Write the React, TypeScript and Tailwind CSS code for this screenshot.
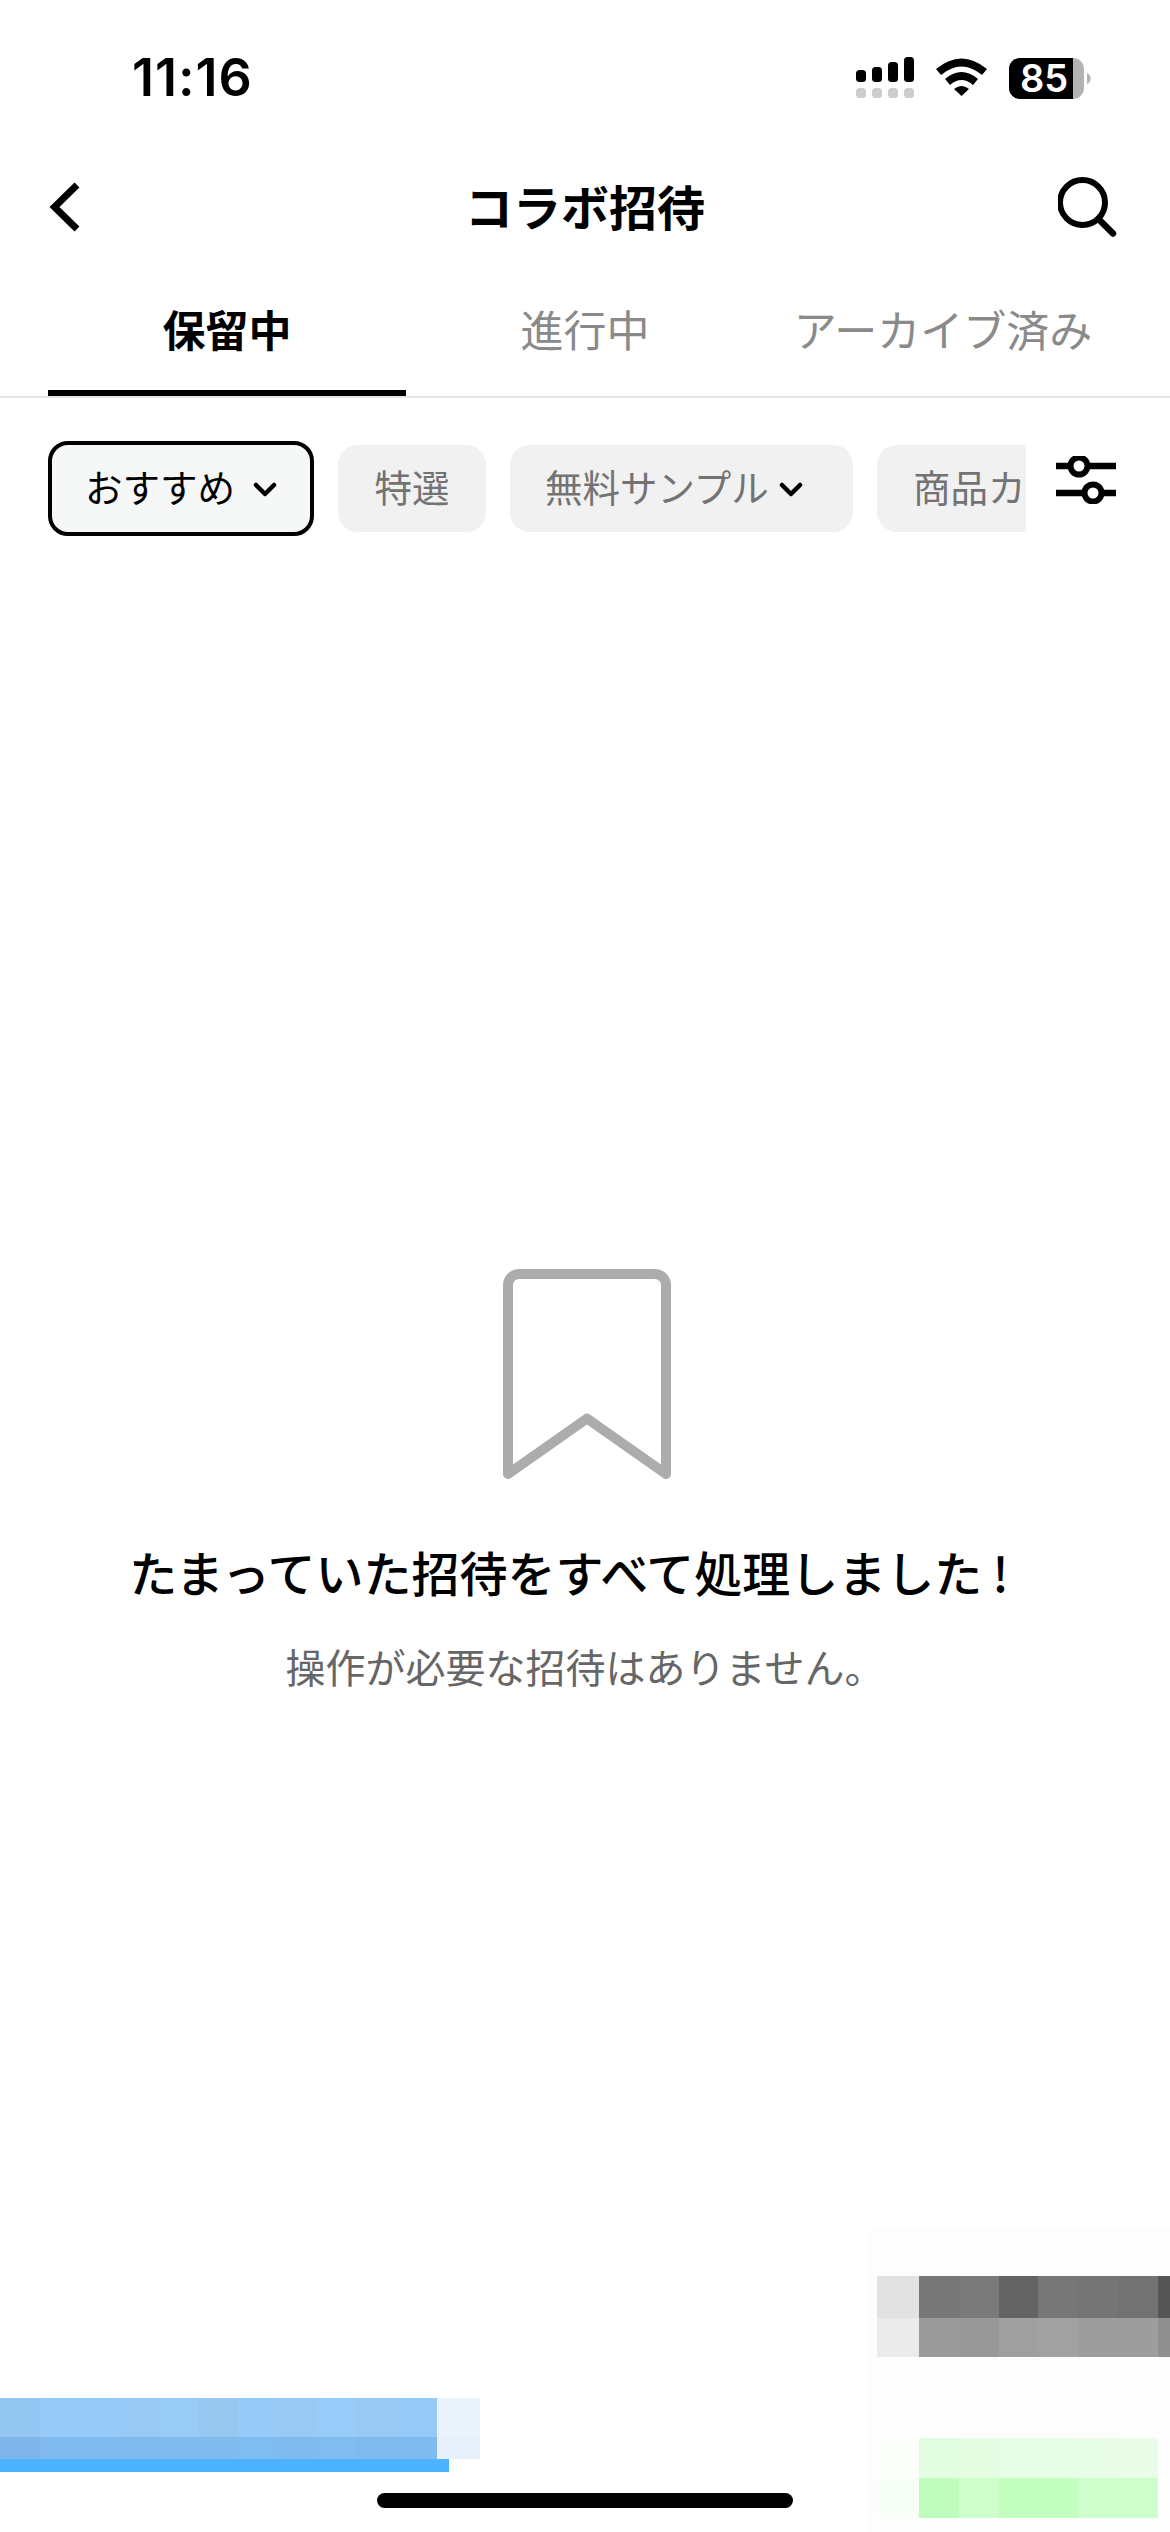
const JP = "font-['Noto_Sans_CJK_JP','Noto_Sans',sans-serif]";

const TABS = [
  { label: "保留中", active: true },
  { label: "進行中", active: false },
  { label: "アーカイブ済み", active: false },
];

const GREY_TOP = ["#777777", "#7a7a7a", "#636363", "#777777", "#757575", "#727272", "#555555"];
const GREY_BOTTOM = ["#9b9b9b", "#989898", "#9f9f9f", "#a1a1a1", "#9d9d9d", "#9d9d9d", "#8f8f8f"];
const GREEN_TOP = ["#e3fde2", "#e4fde3", "#e6fee5", "#e7fee6", "#e8fde7", "#eafde9"];
const GREEN_BOTTOM = ["#bffdbd", "#cdfecb", "#c3fec1", "#c3fec1", "#cdfecb", "#cffecd"];
const BLUE_TOP = ["#94c6f2", "#95caf9", "#95caf9", "#97c9f4", "#98cbf6", "#97c6ef", "#95caf9", "#97c9f4", "#97cbf8", "#97c9f3", "#95caf8"];
const BLUE_BOTTOM = ["#7eb6e9", "#81bbee", "#81bbee", "#81baec", "#81baec", "#81baec", "#7fbdf1", "#80bbee", "#80bcef", "#7fbaec", "#80bbed"];

function StatusBar() {
  return (
    <div className="flex h-[156px] items-center justify-between pl-[132px] pr-[79px]">
      <span className="font-['Inter',sans-serif] text-[52px] font-semibold tracking-[1px] text-black">11:16</span>
      <div className="flex items-center">
        <svg width="131" height="42" viewBox="856 57 131 42" aria-hidden>
          <rect x="856" y="70" width="10" height="12" rx="3.5" fill="#000" />
          <rect x="872" y="67" width="10" height="15" rx="3.5" fill="#000" />
          <rect x="888" y="62" width="10" height="20" rx="3.5" fill="#000" />
          <rect x="904" y="57" width="10" height="25" rx="3.5" fill="#000" />
          {[856, 872, 888, 904].map((x) => (
            <rect key={x} x={x} y="88" width="10" height="10" rx="3.5" fill="#cccccc" />
          ))}
          <path d="M936 69 Q961.5 48 987 69 L982 75 Q961.5 58 941 75 Z" fill="#000" />
          <path d="M945 79 Q961.5 65 978 79 L973 85 Q961.5 75 950 85 Z" fill="#000" />
          <path d="M954 89 Q961.5 83 969 89 L961.5 96 Z" fill="#000" />
        </svg>
        <div className="ml-[22px] flex h-[41px] w-[75px] rounded-[11px] bg-[#b3b3b3]">
          <div className="h-full w-[64px] rounded-l-[11px] bg-black pl-[11px] font-['Inter',sans-serif] text-[38px] leading-[41px] font-semibold text-white">
            85
          </div>
        </div>
        <svg className="ml-[3px]" width="4" height="11" viewBox="0 0 4 11" aria-hidden>
          <path d="M0 0 A6 6 0 0 1 0 11 Z" fill="#b3b3b3" />
        </svg>
      </div>
    </div>
  );
}

function Header() {
  return (
    <div className="grid h-[102px] grid-cols-[1fr_auto_1fr] items-center px-[48px]">
      <svg width="34" height="54" viewBox="48 180 34 54" aria-hidden>
        <path d="M77 185 L54.500 207 L77 229" fill="none" stroke="#000" strokeWidth="7" />
      </svg>
      <h1 className={`${JP} pb-[4px] text-[48px] leading-none font-bold text-black`}>コラボ招待</h1>
      <svg className="justify-self-end" width="64" height="64" viewBox="1058 175 64 64" aria-hidden>
        <circle cx="1082.500" cy="202.500" r="22.500" fill="none" stroke="#000" strokeWidth="6" />
        <path d="M1098.500 219 L1113 233.500" fill="none" stroke="#000" strokeWidth="6.5" strokeLinecap="round" />
      </svg>
    </div>
  );
}

function Tabs() {
  return (
    <div className="border-b-2 border-[#e6e6e6]">
      <div className="grid grid-cols-3 px-[48px]">
        {TABS.map((tab) => (
          <div
            key={tab.label}
            className={`${JP} flex h-[138px] items-center justify-center pt-[8px] text-[43px] leading-none ${
              tab.active ? "border-b-[6px] border-black font-semibold text-black" : "pb-[6px] text-[#8a8a8a]"
            }`}
          >
            {tab.label}
          </div>
        ))}
      </div>
    </div>
  );
}

function Chevron() {
  return (
    <svg className="mt-[8px]" width="24" height="16" viewBox="0 0 24 16" aria-hidden>
      <path d="M3 3 L12 12 L21 3" fill="none" stroke="#000" strokeWidth="4.5" strokeLinecap="round" strokeLinejoin="round" />
    </svg>
  );
}

function FilterRow() {
  return (
    <div className="mt-[43px] flex items-start pl-[48px]">
      <div className={`${JP} flex w-[978px] shrink-0 items-center gap-[24px] overflow-hidden text-[37.500px] leading-none`}>
        <div className="flex h-[95px] w-[266px] shrink-0 items-center justify-center gap-[18px] rounded-[20px] border-4 border-black bg-[#f6f8f8] pb-[5px] text-black">
          おすすめ
          <Chevron />
        </div>
        <div className="flex h-[87px] w-[148px] shrink-0 items-center justify-center rounded-[20px] bg-[#f1f1f1] pb-[5px] text-[#737373]">
          特選
        </div>
        <div className="flex h-[87px] w-[343px] shrink-0 items-center gap-[10px] rounded-[20px] bg-[#f1f1f1] pb-[5px] pl-[35px] text-[#737373]">
          無料サンプル
          <Chevron />
        </div>
        <div className="flex h-[87px] w-[149px] shrink-0 items-center rounded-l-[20px] bg-[#f1f1f1] pb-[5px] pl-[36px] text-[#737373]">
          商品カ
        </div>
      </div>
      <svg className="mt-[15px] ml-[30px]" width="60" height="48" viewBox="1056 456 60 48" aria-hidden>
        <path d="M1056 466 H1069 M1090 466 H1116 M1056 493 H1082 M1103 493 H1116" fill="none" stroke="#000" strokeWidth="6.5" strokeLinecap="round" />
        <circle cx="1079" cy="466" r="8.5" fill="none" stroke="#000" strokeWidth="6" />
        <circle cx="1093" cy="493" r="8.5" fill="none" stroke="#000" strokeWidth="6" />
      </svg>
    </div>
  );
}

function EmptyState() {
  return (
    <div className="mt-[733px] flex flex-col items-center">
      <svg className="ml-[4px]" width="168" height="210" viewBox="504 1269 168 210" aria-hidden>
        <path
          d="M509 1474 V1285 A11 11 0 0 1 520 1274 H656 A11 11 0 0 1 667 1285 V1474 L588 1418.500 Z"
          fill="none"
          stroke="#acacac"
          strokeWidth="10"
          strokeLinejoin="round"
        />
      </svg>
      <p className={`${JP} mt-[64px] pr-[32px] text-[48px] leading-[56px] font-medium whitespace-nowrap text-black`}>
        たまっていた招待をすべて処理しました<span className="ml-[10px]">!</span>
      </p>
      <p className={`${JP} mt-[39px] text-[40px] leading-[56px] whitespace-nowrap text-[#666666]`}>
        操作が必要な招待はありません。
      </p>
    </div>
  );
}

// pixelated patches that cover parts of the screenshot
function MosaicPatches() {
  return (
    <>
      <div className="absolute top-[2398px] left-0 flex h-[39px] w-[480px]">
        {BLUE_TOP.map((c, i) => (
          <div key={i} className="h-full flex-1" style={{ backgroundColor: c }} />
        ))}
        <div className="h-full w-[43px] bg-[#eaf2fc]" />
      </div>
      <div className="absolute top-[2437px] left-0 flex h-[22px] w-[480px]">
        {BLUE_BOTTOM.map((c, i) => (
          <div key={i} className="h-full flex-1" style={{ backgroundColor: c }} />
        ))}
        <div className="h-full w-[43px] bg-[#e6effa]" />
      </div>
      <div className="absolute top-[2459px] left-0 h-[13px] w-[449px] bg-[#4db3ff]" />

      <div className="absolute top-[2228px] left-[870px] h-[304px] w-[300px] bg-[#fdfdfd]" />
      <div className="absolute top-[2276px] left-[877px] flex h-[42px] w-[293px]">
        <div className="h-full w-[42px] bg-[#e2e2e2]" />
        {GREY_TOP.map((c, i) => (
          <div key={i} className={`h-full ${i === 6 ? "w-[12px]" : "flex-1"}`} style={{ backgroundColor: c }} />
        ))}
      </div>
      <div className="absolute top-[2318px] left-[877px] flex h-[39px] w-[293px]">
        <div className="h-full w-[42px] bg-[#ebebeb]" />
        {GREY_BOTTOM.map((c, i) => (
          <div key={i} className={`h-full ${i === 6 ? "w-[12px]" : "flex-1"}`} style={{ backgroundColor: c }} />
        ))}
      </div>
      <div className="absolute top-[2438px] left-[877px] flex h-[40px] w-[281px]">
        <div className="h-full w-[42px] bg-[#fdfffd]" />
        {GREEN_TOP.map((c, i) => (
          <div key={i} className="h-full flex-1" style={{ backgroundColor: c }} />
        ))}
      </div>
      <div className="absolute top-[2478px] left-[877px] flex h-[40px] w-[281px]">
        <div className="h-full w-[42px] bg-[#f7fff7]" />
        {GREEN_BOTTOM.map((c, i) => (
          <div key={i} className="h-full flex-1" style={{ backgroundColor: c }} />
        ))}
      </div>
    </>
  );
}

export default function App() {
  return (
    <div className="relative h-[2532px] w-[1170px] overflow-hidden bg-white">
      <StatusBar />
      <Header />
      <Tabs />
      <FilterRow />
      <EmptyState />
      <MosaicPatches />
      <div className="absolute top-[2493px] left-[377px] h-[15px] w-[416px] rounded-full bg-black" />
    </div>
  );
}
